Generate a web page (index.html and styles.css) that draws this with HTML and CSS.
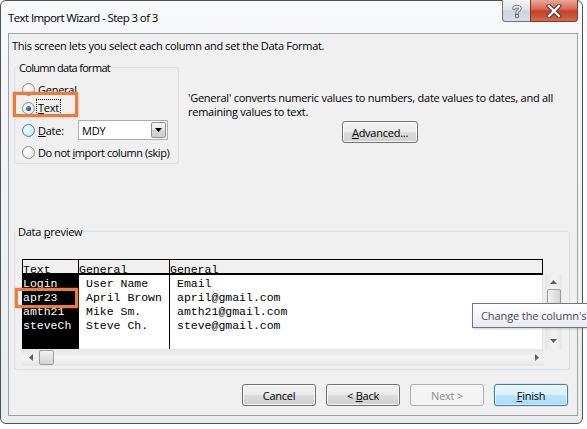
FILE: index.html
```html
<!DOCTYPE html>
<html>
<head>
<meta charset="utf-8">
<link rel="stylesheet" href="styles.css">
</head>
<body>
<div class="window">
  <div class="titlebar">
    <span class="title">Text Import Wizard - Step 3 of 3</span>
    <div class="caption">
      <div class="cap help">
        <svg width="12" height="14" viewBox="0 0 12 14">
          <path d="M3 4.5 C3 2 9 2 9 4.5 C9 6.5 6 6.5 6 9" fill="none" stroke="#5b6470" stroke-width="3.4" stroke-linecap="round"/>
          <path d="M3 4.5 C3 2 9 2 9 4.5 C9 6.5 6 6.5 6 9" fill="none" stroke="#fff" stroke-width="1.6" stroke-linecap="round"/>
          <rect x="4.6" y="10.4" width="2.8" height="2.8" fill="#fff" stroke="#5b6470" stroke-width="1"/>
        </svg>
      </div>
      <div class="cap close">
        <svg width="16" height="14" viewBox="0 0 16 14">
          <path d="M3 2 L13 12 M13 2 L3 12" stroke="#5a2a22" stroke-width="4.4" stroke-linecap="square"/>
          <path d="M3 2 L13 12 M13 2 L3 12" stroke="#fff" stroke-width="2.4" stroke-linecap="square"/>
        </svg>
      </div>
    </div>
  </div>

  <div class="client">
    <p class="intro">This screen lets you select each column and set the Data Format.</p>

    <div class="top">
      <fieldset class="group format">
        <legend>Column data format</legend>
        <div class="opt opt-general"><span class="radio"></span><span>General</span></div>
        <div class="opt opt-text"><span class="radio checked"></span><span class="focus"><u>T</u>ext</span></div>
        <div class="opt opt-date">
          <span class="radio hot"></span><span class="date-label"><u>D</u>ate:</span>
          <div class="combo"><span class="combo-value">MDY</span><span class="combo-btn"><svg width="7" height="4" viewBox="0 0 7 4"><path d="M0 0 H7 L3.5 4 Z" fill="#000"/></svg></span></div>
        </div>
        <div class="opt opt-skip"><span class="radio"></span><span>Do not <u>i</u>mport column (skip)</span></div>
        <div class="mark mark-text"></div>
      </fieldset>

      <div class="desc">
        <p><span class="dl">'General' converts numeric values to numbers, date values to dates, and all</span><span class="dl">remaining values to text.</span></p>
        <button class="btn adv"><u>A</u>dvanced...</button>
      </div>
    </div>

    <fieldset class="group preview">
      <legend>Data <u>p</u>review</legend>
      <div class="pv-main">
        <div class="grid">
          <div class="hcell c1">Text</div>
          <div class="hcell c2">General</div>
          <div class="hcell c3">General</div>
          <div class="bcell c1 sel"><div>Login</div><div>apr23</div><div>amth21</div><div>steveCh</div></div>
          <div class="bcell c2"><div>User Name</div><div>April Brown</div><div>Mike Sm.</div><div>Steve Ch.</div></div>
          <div class="bcell c3"><div>Email</div><div>april@gmail.com</div><div>amth21@gmail.com</div><div>steve@gmail.com</div></div>
          <div class="mark mark-row"></div>
        </div>
        <div class="vscroll">
          <svg class="arr" width="7" height="4" viewBox="0 0 7 4"><path d="M0 4 H7 L3.5 0 Z" fill="#606060"/></svg>
          <span class="vthumb"></span>
          <svg class="arr" width="7" height="4" viewBox="0 0 7 4"><path d="M0 0 H7 L3.5 4 Z" fill="#606060"/></svg>
        </div>
      </div>
      <div class="hscroll">
        <svg class="arr" width="4" height="7" viewBox="0 0 4 7"><path d="M4 0 V7 L0 3.5 Z" fill="#606060"/></svg>
        <span class="hthumb"></span>
        <span class="hspace"></span>
        <svg class="arr" width="4" height="7" viewBox="0 0 4 7"><path d="M0 0 V7 L4 3.5 Z" fill="#606060"/></svg>
      </div>
    </fieldset>

    <div class="buttons">
      <button class="btn">Cancel</button>
      <button class="btn">&lt; <u>B</u>ack</button>
      <button class="btn disabled">Next &gt;</button>
      <button class="btn default"><u>F</u>inish</button>
    </div>
  </div>

  <div class="tooltip">Change the column's</div>
</div>
</body>
</html>
```

FILE: styles.css
```css
* { box-sizing: border-box; }

html, body {
  margin: 0;
  padding: 0;
  background: #ffffff;
}

body {
  width: 587px;
  height: 429px;
  overflow: hidden;
  font-family: "Open Sans", "Noto Sans", sans-serif;
  font-size: 11px;
  letter-spacing: -0.25px;
  color: #000;
}

.window {
  position: relative;
  width: 583px;
  height: 424px;
  border: 1px solid #4f5358;
  border-radius: 6px;
  background: linear-gradient(180deg, #f7f9fb 0%, #eef1f4 60%, #e9ecef 100%);
  padding: 0 4px 0 7px;
  display: flex;
  flex-direction: column;
}

/* title bar */
.titlebar {
  height: 32px;
  display: flex;
  justify-content: space-between;
  align-items: flex-start;
  flex-shrink: 0;
}

.title {
  padding: 9px 0 0 0;
  font-size: 11.5px;
  letter-spacing: -0.6px;
  line-height: 16px;
  color: #000;
}

.caption {
  display: flex;
  margin-top: -1px;
}

.cap {
  height: 22px;
  display: flex;
  align-items: center;
  justify-content: center;
  border: 1px solid #6a737f;
  border-top: none;
}

.help {
  width: 28px;
  border-right: none;
  border-radius: 0 0 0 4px;
  background: linear-gradient(180deg, #f3f5f8 0%, #e0e4ea 45%, #cfd5dd 55%, #d9dee5 100%);
}

.close {
  width: 48px;
  border-color: #7b3a30;
  border-radius: 0 0 4px 0;
  background: linear-gradient(180deg, #e9a998 0%, #d86f58 40%, #c54129 55%, #d2694f 100%);
}

/* client area */
.client {
  height: 383px;
  border: 1px solid #9ea3a8;
  background: #f0f0f0;
  padding: 4px 5px 0 5px;
  display: flex;
  flex-direction: column;
  flex-shrink: 0;
}

.intro {
  margin: 0 0 0 -2px;
  font-size: 11px;
  letter-spacing: -0.3px;
  line-height: 16px;
}

.top {
  display: flex;
  margin-top: 6px;
}

.group {
  margin: 0;
  border: 1px solid #d5dfe5;
  border-radius: 3px;
  position: relative;
  min-width: 0;
}

.group legend {
  font-size: 11px;
  line-height: 15px;
  padding: 0 1px;
  margin-left: -4px;
}

.format legend {
  letter-spacing: -0.7px;
}

.format {
  width: 165px;
  padding: 5px 0 2px 7px;
}

.opt {
  display: flex;
  align-items: center;
  height: 18px;
  white-space: nowrap;
}

.opt-text { margin-top: 1px; }
.opt-date { margin-top: 3px; height: 20px; }
.opt-skip { margin-top: 3px; letter-spacing: -0.45px; }

.radio {
  width: 13px;
  height: 13px;
  border-radius: 50%;
  border: 1px solid #8e8f8f;
  background: radial-gradient(circle at 40% 40%, #ffffff 0%, #f2f2f2 45%, #d4d4d4 100%);
  margin-right: 3px;
  flex-shrink: 0;
  display: flex;
  align-items: center;
  justify-content: center;
}

.radio.hot {
  border-color: #3c7fb1;
  background: radial-gradient(circle at 40% 40%, #ffffff 0%, #dff1fd 45%, #a9d8f5 100%);
}

.radio.checked::after {
  content: "";
  width: 5px;
  height: 5px;
  border-radius: 50%;
  background: radial-gradient(circle at 35% 35%, #6aa9e0 0%, #1b4f93 60%, #0d2d63 100%);
}

.focus {
  outline: 1px dotted #000;
  outline-offset: 0;
  padding: 0 1px;
  margin-left: -1px;
  line-height: 16px;
}

.date-label {
  width: 40px;
}

.combo {
  width: 90px;
  height: 20px;
  border: 1px solid #abadb3;
  background: #fff;
  display: flex;
  align-items: center;
  justify-content: space-between;
  padding: 0 1px 0 3px;
}

.combo-value {
  font-size: 11px;
}

.combo-btn {
  width: 15px;
  height: 16px;
  border: 1px solid #8c8f94;
  border-radius: 2px;
  background: linear-gradient(180deg, #f6f6f6 0%, #e6e6e6 50%, #d6d6d6 51%, #cfcfcf 100%);
  display: flex;
  align-items: center;
  justify-content: center;
}

.mark {
  position: absolute;
  border: 3px solid #ef7b3a;
  box-shadow: 0 0 2px rgba(239, 123, 58, 0.7);
  pointer-events: none;
}

.mark-text {
  left: -2px;
  top: 17px;
  width: 65px;
  height: 25px;
}

.desc {
  flex: 1;
  margin-left: 9px;
  padding-top: 31px;
  display: flex;
  flex-direction: column;
  align-items: center;
}

.desc p {
  margin: 0;
  align-self: stretch;
  font-size: 11px;
  white-space: nowrap;
  display: flex;
  flex-direction: column;
}

.dl {
  display: block;
  height: 14px;
  line-height: 14px;
}

/* buttons */
.btn {
  width: 74px;
  height: 22px;
  padding: 0;
  font-family: inherit;
  font-size: 11px;
  letter-spacing: -0.25px;
  color: #000;
  border: 1px solid #707070;
  border-radius: 3px;
  background: linear-gradient(180deg, #f2f2f2 0%, #ebebeb 50%, #dddddd 51%, #cfcfcf 100%);
  box-shadow: inset 0 0 0 1px rgba(255, 255, 255, 0.8);
}

.adv {
  width: 76px;
  margin-top: 2px;
}

.btn.disabled {
  color: #8d8d8d;
  border-color: #adb2b5;
  background: #f4f4f4;
  box-shadow: none;
}

.btn.default {
  border-color: #3c7fb1;
  background: linear-gradient(180deg, #eaf6fd 0%, #d9f0fc 50%, #bee6fd 51%, #a7d9f5 100%);
  box-shadow: inset 0 0 0 1px rgba(255, 255, 255, 0.6), 0 0 1px #48a3e0;
}

.buttons {
  display: flex;
  justify-content: flex-end;
  gap: 10px;
  margin-top: 14px;
  margin-right: 4px;
}

/* preview */
.preview {
  margin-top: 60px;
  margin-right: 2px;
  padding: 20px 7px 3px 7px;
}

.group.preview legend {
  margin-left: -5px;
}

.pv-main {
  display: flex;
  align-items: flex-start;
}

.grid {
  position: relative;
  width: 522px;
  height: 90px;
  border-top: 1px solid #000;
  border-left: 1px solid #000;
  display: grid;
  grid-template-columns: 56px 91px 1fr;
  grid-template-rows: 15px 1fr;
  font-family: "Liberation Mono", "Courier New", monospace;
  font-size: 11.5px;
  letter-spacing: 0;
  background: #fff;
}

.hcell {
  background: #f0f0f0;
  border-bottom: 2px solid #000;
  line-height: 13px;
  padding-top: 3px;
  overflow: hidden;
  white-space: nowrap;
}

.c1, .c2 { border-right: 1px solid #000; }
.hcell.c3 { border-right: 1px solid #000; }
.bcell.c3 { border-right: 1px solid #e3e3e3; }

.bcell {
  padding-top: 2px;
  line-height: 14px;
  white-space: nowrap;
  overflow: hidden;
}

.bcell.c2, .bcell.c3 { padding-left: 7px; }

.bcell.sel {
  background: #000;
  color: #fff;
}

.mark-row {
  left: -8px;
  top: 28px;
  width: 63px;
  height: 20px;
}

.vscroll {
  width: 17px;
  height: 74px;
  margin-top: 16px;
  margin-left: 2px;
  background: linear-gradient(90deg, #e6e6e6, #f4f4f4 50%, #e6e6e6);
  display: flex;
  flex-direction: column;
  align-items: center;
  padding: 5px 0 6px;
}

.vthumb {
  width: 14px;
  height: 22px;
  margin-top: 5px;
  border: 1px solid #9d9d9d;
  border-radius: 2px;
  background: linear-gradient(90deg, #f3f3f3, #e2e2e2 50%, #d4d4d4);
}

.vscroll .arr:last-child { margin-top: auto; }

.hscroll {
  width: 522px;
  height: 17px;
  background: linear-gradient(180deg, #e6e6e6, #f4f4f4 50%, #e6e6e6);
  display: flex;
  align-items: center;
  padding: 0 5px 0 7px;
}

.hthumb {
  width: 15px;
  height: 15px;
  margin-left: 6px;
  border: 1px solid #9d9d9d;
  border-radius: 2px;
  background: linear-gradient(180deg, #f3f3f3, #e2e2e2 50%, #d4d4d4);
}

.hspace { flex: 1; }

/* tooltip */
.tooltip {
  position: absolute;
  left: 471px;
  top: 302px;
  width: 130px;
  height: 25px;
  padding: 0 0 0 8px;
  border: 1px solid #767676;
  background: linear-gradient(180deg, #ffffff, #e9eaf3);
  color: #4c4c4c;
  font-size: 11px;
  letter-spacing: -0.1px;
  line-height: 23px;
  white-space: nowrap;
  box-shadow: 1px 1px 2px rgba(0, 0, 0, 0.2);
}
```
